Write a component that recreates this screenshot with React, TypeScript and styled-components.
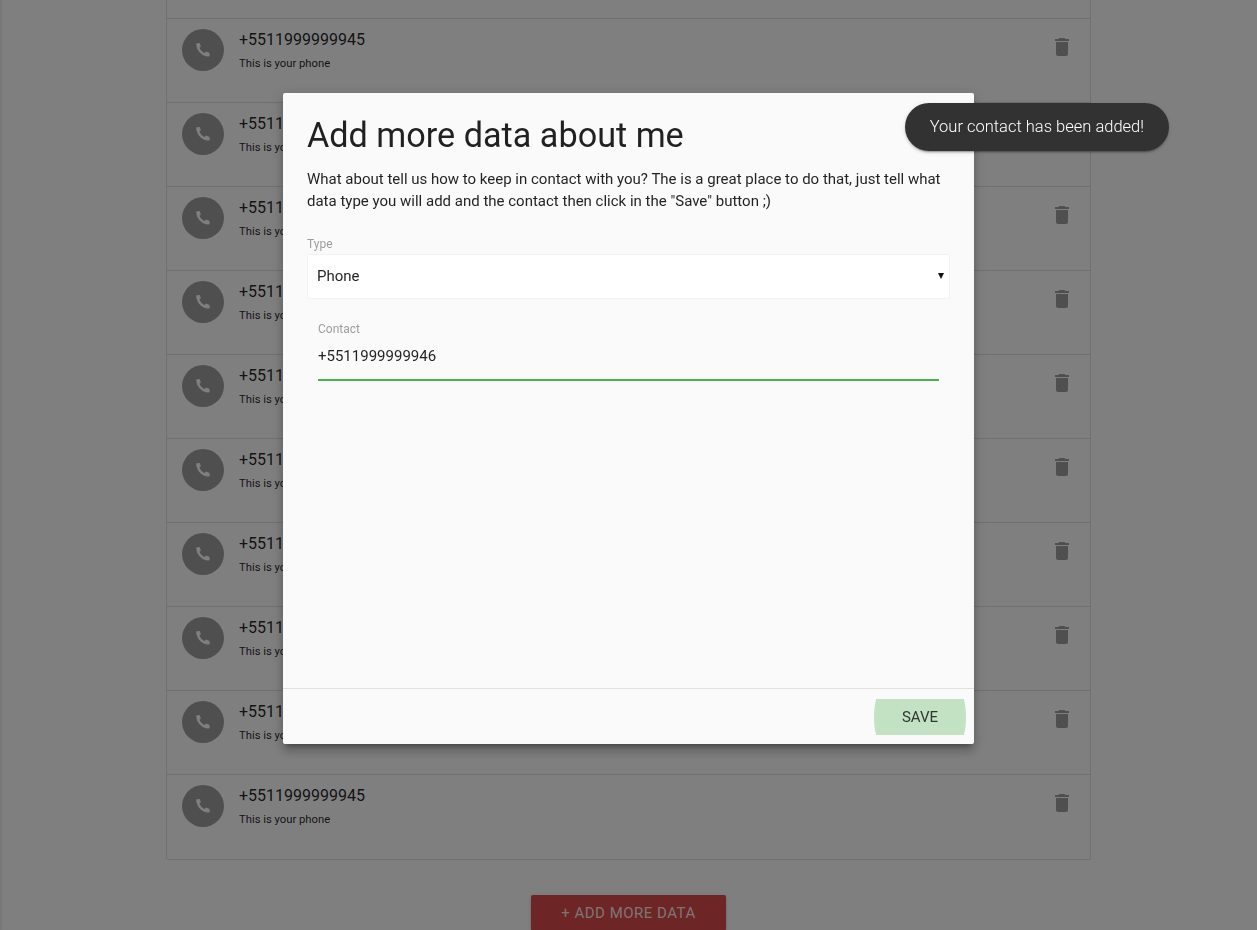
import React from 'react';
import styled, { createGlobalStyle } from 'styled-components';

const GlobalStyle = createGlobalStyle`
  html, body {
    margin: 0;
    height: 930px;
    overflow: hidden;
    background: #fff;
    font-family: Roboto, 'Noto Sans', sans-serif;
  }
`;

const Page = styled.div`
  display: flex;
  flex-direction: column;
  align-items: center;
  height: 930px;
  overflow: hidden;
`;

const SideShadow = styled.div`
  position: fixed;
  top: 0;
  bottom: 0;
  left: -10px;
  width: 10px;
  box-shadow: 0 0 3px 1px rgba(0, 0, 0, 0.12);
`;

const ContactList = styled.ul`
  box-sizing: border-box;
  list-style: none;
  width: 925px;
  margin: 0 0 35px;
  padding: 18px 0 0;
  flex-shrink: 0;
  border: 1px solid #e0e0e0;
  border-top: 0;
  border-radius: 0 0 2px 2px;
`;

const ContactRow = styled.li`
  box-sizing: border-box;
  display: flex;
  height: 84px;
  padding: 10px 16px 0 15px;
  border-top: 1px solid #e0e0e0;

  &:last-child {
    height: 85px;
  }
`;

const Avatar = styled.div`
  display: flex;
  align-items: center;
  justify-content: center;
  flex-shrink: 0;
  width: 42px;
  height: 42px;
  border-radius: 50%;
  background: #9e9e9e;
  color: #fff;
`;

const ContactText = styled.div`
  flex: 1;
  padding-left: 15px;
`;

const ContactValue = styled.div`
  font-size: 16px;
  line-height: 22px;
  color: rgba(0, 0, 0, 0.87);
`;

const ContactNote = styled.div`
  margin-top: 4px;
  font-size: 11.25px;
  line-height: 18px;
  color: rgba(0, 0, 0, 0.87);
`;

const TrashIcon = styled.svg`
  width: 24px;
  height: 24px;
  margin-top: 6px;
  fill: #9e9e9e;
`;

const AddButton = styled.button`
  flex-shrink: 0;
  width: 195px;
  height: 36px;
  border: 0;
  border-radius: 2px;
  background: #dc4a4a;
  color: rgba(255, 255, 255, 0.9);
  font-family: Roboto, sans-serif;
  font-size: 15px;
  letter-spacing: 0.5px;
  text-transform: uppercase;
  box-shadow: 0 2px 2px 0 rgba(0, 0, 0, 0.14), 0 1px 5px 0 rgba(0, 0, 0, 0.12);
`;

const Overlay = styled.div`
  position: fixed;
  inset: 0;
  background: rgba(0, 0, 0, 0.5);
`;

const Modal = styled.div`
  position: fixed;
  top: 93px;
  left: 283px;
  width: 691px;
  height: 651px;
  display: flex;
  flex-direction: column;
  border-radius: 2px;
  background: #fafafa;
  box-shadow: 0 8px 10px 1px rgba(0, 0, 0, 0.14), 0 3px 14px 2px rgba(0, 0, 0, 0.12), 0 5px 5px -3px rgba(0, 0, 0, 0.3);
`;

const ModalContent = styled.div`
  flex: 1;
  padding: 24px 24px 0;
  color: rgba(0, 0, 0, 0.87);
`;

const ModalTitle = styled.h4`
  margin: 0 0 15px;
  font-size: 34.2px;
  font-weight: 400;
  line-height: 36px;
`;

const ModalText = styled.p`
  margin: 0 0 25px;
  font-size: 15px;
  line-height: 22px;
`;

const FieldLabel = styled.label`
  display: block;
  font-size: 12px;
  line-height: 14px;
  color: #9e9e9e;
`;

const SelectWrap = styled.div`
  position: relative;
  width: 643px;
  margin-top: 3px;

  &::after {
    content: '';
    position: absolute;
    top: 19px;
    right: 6px;
    border-style: solid;
    border-width: 6px 3px 0;
    border-color: #111 transparent transparent;
    pointer-events: none;
  }
`;

const TypeSelect = styled.select`
  box-sizing: border-box;
  display: block;
  width: 100%;
  height: 45px;
  padding: 0 9px 2px;
  appearance: none;
  border: 1px solid #f2f2f2;
  border-radius: 2px;
  background: #fff;
  color: rgba(0, 0, 0, 0.87);
  font-family: Roboto, sans-serif;
  font-size: 15px;
  outline: none;
`;

const ContactField = styled.div`
  padding: 23px 11px 0;
`;

const ContactInput = styled.input`
  box-sizing: border-box;
  display: block;
  width: 100%;
  height: 43px;
  margin-top: 2px;
  padding: 0 0 5px;
  border: 0;
  border-bottom: 2px solid #4caf50;
  background: transparent;
  color: rgba(0, 0, 0, 0.87);
  font-family: Roboto, sans-serif;
  font-size: 15px;
  outline: none;
`;

const ModalFooter = styled.div`
  box-sizing: border-box;
  display: flex;
  justify-content: flex-end;
  height: 56px;
  padding: 10px 8px 0;
  border-top: 1px solid #e0e0e0;
`;

const SaveButton = styled.button`
  position: relative;
  overflow: hidden;
  width: 92px;
  height: 36px;
  padding: 0;
  border: 0;
  background: transparent;
  color: #343434;
  font-family: Roboto, sans-serif;
  font-size: 15px;
  text-transform: uppercase;

  &::before {
    content: '';
    position: absolute;
    inset: -8px 0;
    border-radius: 8px / 26px;
    background: #c2e2c3;
  }

  span {
    position: relative;
  }
`;

const Toast = styled.div`
  position: fixed;
  top: 103px;
  right: 88px;
  box-sizing: border-box;
  height: 48px;
  padding: 0 25px 1px;
  display: flex;
  align-items: center;
  border-radius: 24px;
  background: #323232;
  color: #fff;
  font-size: 16.5px;
  font-weight: 300;
  box-shadow: 0 2px 2px 0 rgba(0, 0, 0, 0.14), 0 1px 5px 0 rgba(0, 0, 0, 0.12), 0 3px 1px -2px rgba(0, 0, 0, 0.2);
`;

const contacts = Array.from({ length: 10 }, (_, i) => i);

function App() {
  return (
    <>
      <GlobalStyle />
      <Page>
        <ContactList>
          {contacts.map((i) => (
            <ContactRow key={i}>
              <Avatar>
                <svg width='16' height='16' viewBox='0 0 16 16' fill='currentColor'>
                  <path d='M2.2 1.2 4.8 1l1 3.6-1.4 1.2c.8 2 3.2 4.6 5.4 5.2L11 9.6l3.6 1.4v2.4c0 .8-.6 1.2-1.4 1.2C7 14.2 1.6 8.4 1.2 2.4c0-.6.4-1.2 1-1.2z' />
                </svg>
              </Avatar>
              <ContactText>
                <ContactValue>+5511999999945</ContactValue>
                <ContactNote>This is your phone</ContactNote>
              </ContactText>
              <TrashIcon viewBox='0 0 24 24'>
                <path d='M6 19c0 1.1.9 2 2 2h8c1.1 0 2-.9 2-2V7H6v12zM19 4h-3.5l-1-1h-5l-1 1H5v2h14V4z' />
              </TrashIcon>
            </ContactRow>
          ))}
        </ContactList>
        <AddButton>+ Add more data</AddButton>
      </Page>
      <SideShadow />
      <Overlay />
      <Modal>
        <ModalContent>
          <ModalTitle>Add more data about me</ModalTitle>
          <ModalText>
            What about tell us how to keep in contact with you? The is a great place to do that, just tell what data type you will add and the contact then click in the "Save" button ;)
          </ModalText>
          <FieldLabel>Type</FieldLabel>
          <SelectWrap>
            <TypeSelect defaultValue='phone'>
              <option value='phone'>Phone</option>
              <option value='email'>Email</option>
            </TypeSelect>
          </SelectWrap>
          <ContactField>
            <FieldLabel>Contact</FieldLabel>
            <ContactInput defaultValue='+5511999999946' />
          </ContactField>
        </ModalContent>
        <ModalFooter>
          <SaveButton>
            <span>Save</span>
          </SaveButton>
        </ModalFooter>
      </Modal>
      <Toast>Your contact has been added!</Toast>
    </>
  );
}

export default App;
